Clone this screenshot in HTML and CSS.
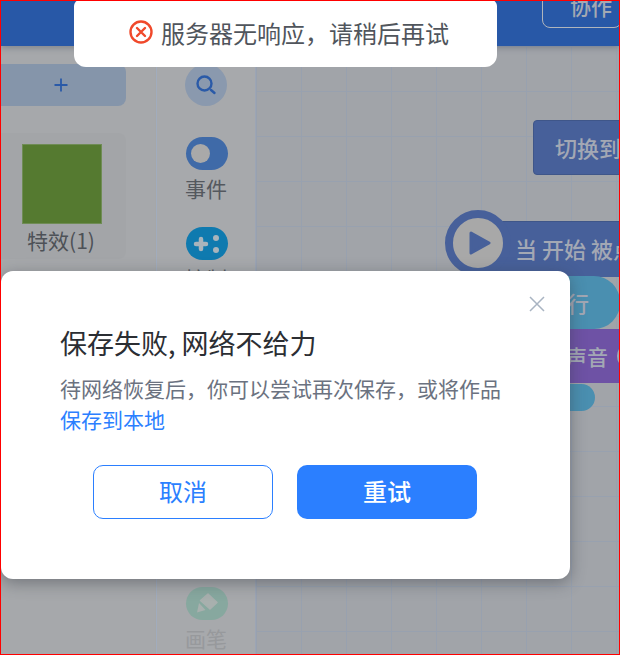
FILE: index.html
```html
<!DOCTYPE html>
<html lang="zh-CN">

<head>
    <meta charset="UTF-8">
    <meta name="viewport" content="width=device-width, initial-scale=1.0">
    <title>保存失败</title>

    <link rel="stylesheet" href="styles.css">
</head>

<body>
    <div class="page">
        <div class="header">
            <button class="btn_collab">协作</button>
        </div>

        <div class="workspace">
            <div class="assets">
                <div class="add_asset">
                    <svg width="16" height="16" viewBox="0 0 16 16"><path d="M8 1.500v13M1.500 8h13" stroke="#2a5aa8" stroke-width="1.800" fill="none"/></svg>
                </div>
                <div class="asset_card">
                    <div class="asset_thumb"></div>
                    <div class="asset_name">特效(1)</div>
                </div>
            </div>

            <div class="categories">
                <div class="search_circle">
                    <svg width="24" height="24" viewBox="0 0 24 24"><circle cx="10.500" cy="10.500" r="7" stroke="#2a5aa8" stroke-width="2.400" fill="none"/><path d="M17 17l3.500 3" stroke="#2a5aa8" stroke-width="2.400" stroke-linecap="round"/></svg>
                </div>
                <div class="category">
                    <div class="pill pill_event"><span class="pill_knob"></span></div>
                    <div class="category_name">事件</div>
                </div>
                <div class="category">
                    <div class="pill pill_control">
                        <svg width="42" height="33" viewBox="0 0 42 33"><path d="M15 12v10M10 17h10" stroke="#a8b4bc" stroke-width="4.500" stroke-linecap="round"/><circle cx="30" cy="11" r="3" fill="#a8b4bc"/><circle cx="30" cy="23" r="3" fill="#a8b4bc"/></svg>
                    </div>
                    <div class="category_name">控制</div>
                </div>
                <div class="category category_pen">
                    <div class="pill pill_pen">
                        <svg width="42" height="33" viewBox="0 0 42 33"><path d="M22 7l9 8.500-7 6.500-9.500-8.500z" fill="#a8b0ae" stroke="#a8b0ae" stroke-width="1.500" stroke-linejoin="round"/><path d="M13 16l6.500 7-8.500 2.500z" fill="#a8b0ae"/></svg>
                    </div>
                    <div class="category_name">画笔</div>
                </div>
            </div>

            <div class="canvas">
                <div class="block block_switch">切换到</div>
                <div class="block block_hat">
                    <span class="hat_circle">
                        <svg width="22" height="24" viewBox="0 0 22 24"><path d="M2 2l18 10L2 22z" fill="#47609a" stroke="#47609a" stroke-width="3" stroke-linejoin="round"/></svg>
                    </span>
                    <span class="hat_bar">当 开始 被点击</span>
                </div>
                <div class="block block_run">行</div>
                <div class="block block_sound">声音</div>
                <div class="block block_end"></div>
            </div>
        </div>

        <div class="toast">
            <svg width="24" height="24" viewBox="0 0 24 24"><circle cx="12" cy="12" r="10.500" stroke="#f0492b" stroke-width="2.400" fill="none"/><path d="M8 8l8 8M16 8l-8 8" stroke="#f0492b" stroke-width="2.400" stroke-linecap="round"/></svg>
            <span>服务器无响应，请稍后再试</span>
        </div>

        <div class="dialog">
            <svg class="dialog_close" width="18" height="18" viewBox="0 0 18 18"><path d="M2 2l14 14M16 2L2 16" stroke="#a9b4c2" stroke-width="1.500"/></svg>
            <h2 class="dialog_title">保存失败, 网络不给力</h2>
            <p class="dialog_text">待网络恢复后，你可以尝试再次保存，或将作品<br><a class="dialog_link">保存到本地</a></p>
            <div class="dialog_btns">
                <button class="btn btn_cancel">取消</button>
                <button class="btn btn_retry">重试</button>
            </div>
        </div>
    </div>
</body>

</html>
```

FILE: styles.css
```css
* {
    box-sizing: border-box;
}

body {
    margin: 0;
    font-family: "Noto Sans CJK SC", "Noto Sans", sans-serif;
}

.page {
    position: relative;
    display: flex;
    flex-direction: column;
    width: 620px;
    height: 655px;
    overflow: hidden;
    border: 1px solid #ff0000;
    background-color: #a6a8ab;
}

.header {
    display: flex;
    justify-content: flex-end;
    align-items: flex-start;
    position: relative;
    z-index: 2;
    flex: none;
    height: 45px;
    background-color: #2858a7;
    box-shadow: 0 2px 6px rgba(60, 70, 90, 0.35);
}

.btn_collab {
    width: 80px;
    height: 38px;
    margin-top: -11px;
    margin-right: -3px;
    padding: 0 0 6px 27px;
    text-align: left;
    border: 1px solid #b0b5bc;
    border-radius: 8px;
    background: transparent;
    color: #a4a9b2;
    font-family: inherit;
    font-size: 21px;
    font-weight: 500;
}

.workspace {
    display: flex;
    flex: 1;
    min-height: 0;
}

.assets {
    flex: none;
    width: 155px;
    padding-top: 18px;
}

.add_asset {
    display: flex;
    justify-content: center;
    align-items: center;
    width: 125px;
    height: 42px;
    padding-right: 5px;
    border-radius: 0 8px 8px 0;
    background-color: #8595aa;
}

.asset_card {
    width: 125px;
    height: 126px;
    margin-top: 27px;
    padding: 11px 5px 0 0;
    border-radius: 0 8px 8px 0;
    background-color: #a3a5a8;
    text-align: center;
}

.asset_thumb {
    width: 80px;
    height: 80px;
    margin-left: 21px;
    border: 1px solid #6f8c55;
    background-color: #557a30;
}

.asset_name {
    margin-top: 1px;
    font-size: 21px;
    line-height: 30px;
    color: #4d5157;
}

.categories {
    display: flex;
    flex-direction: column;
    align-items: center;
    position: relative;
    flex: none;
    width: 100px;
    padding-top: 18px;
    border-left: 1px solid #a1acbd;
    border-right: 1px solid #9ca5b5;
    background-color: #a7a9ac;
    box-shadow: 1px 0 2px rgba(70, 80, 110, 0.2);
}

.search_circle {
    display: flex;
    justify-content: center;
    align-items: center;
    width: 42px;
    height: 42px;
    border-radius: 50%;
    background-color: #8a99ae;
}

.category {
    display: flex;
    flex-direction: column;
    align-items: center;
    width: 100%;
    height: 90px;
}

.search_circle + .category {
    margin-top: 31px;
}

.category_pen {
    position: absolute;
    top: 541px;
    left: 0;
}

.pill {
    display: flex;
    align-items: center;
    flex: none;
    width: 42px;
    height: 33px;
    margin-left: 2px;
    border-radius: 17px;
}

.pill_event {
    padding-left: 5px;
    background-color: #3f6aa8;
}

.pill_knob {
    width: 19px;
    height: 19px;
    border-radius: 50%;
    background-color: #a9a9a9;
}

.pill_control {
    background-color: #0f7aaf;
}

.pill_pen {
    background-color: #87a89f;
}

.category_name {
    margin-top: 3px;
    font-size: 21px;
    line-height: 30px;
    color: #54585e;
}

.category_pen .category_name {
    color: #97999c;
}

.canvas {
    position: relative;
    flex: 1;
    background-color: #a1a4a9;
    background-image:
        linear-gradient(to right, #98a1af 1px, transparent 1px),
        linear-gradient(to bottom, #98a1af 1px, transparent 1px);
    background-size: 45px 45px;
    background-position: 45px 0;
}

/* blocks sit on a free canvas, so they keep their own place */
.block {
    position: absolute;
    color: #a3a8b4;
    font-size: 22px;
    font-weight: 500;
}

.block_switch {
    left: 277px;
    top: 74px;
    width: 120px;
    height: 55px;
    padding-left: 21px;
    line-height: 53px;
    border: 1px solid #3f5689;
    border-radius: 4px;
    background-color: #47609a;
}

.block_hat {
    left: 189px;
    top: 164px;
    width: 260px;
    height: 66px;
}

.hat_circle {
    display: flex;
    justify-content: center;
    align-items: center;
    position: absolute;
    left: 0;
    top: 0;
    z-index: 1;
    width: 66px;
    height: 66px;
    border: 8px solid #47609a;
    border-radius: 50%;
    background-color: #a8a8a8;
}

.hat_circle svg {
    margin-left: 4px;
}

.hat_bar {
    position: absolute;
    left: 50px;
    top: 11px;
    width: 210px;
    height: 56px;
    padding-left: 20px;
    line-height: 52px;
    white-space: nowrap;
    background-color: #47609a;
    border-top: 1px solid #3f5689;
}

.block_run {
    left: 200px;
    top: 230px;
    width: 164px;
    height: 53px;
    padding-left: 111px;
    line-height: 53px;
    border-radius: 0 26px 26px 0;
    background-color: #4a8fb0;
}

.block_sound {
    left: 200px;
    top: 283px;
    width: 200px;
    height: 54px;
    padding-left: 110px;
    line-height: 54px;
    font-size: 21px;
    background-color: #6e52a5;
}

.block_sound::after {
    content: "";
    position: absolute;
    left: 161px;
    top: 17px;
    width: 14px;
    height: 20px;
    border-radius: 50%;
    background-color: #a3a8b4;
}

.block_end {
    left: 200px;
    top: 338px;
    width: 139px;
    height: 27px;
    border-radius: 0 14px 14px 0;
    background-color: #4a8fb0;
}

.toast {
    display: flex;
    align-items: center;
    gap: 8px;
    position: absolute;
    left: 73px;
    top: -1px;
    z-index: 5;
    width: 423px;
    height: 67px;
    padding: 0 0 3px 55px;
    border-radius: 6px 6px 12px 12px;
    background-color: #ffffff;
    font-size: 24px;
    color: #50555c;
}

.dialog {
    position: absolute;
    left: 0;
    top: 270px;
    z-index: 4;
    width: 569px;
    height: 308px;
    padding: 52px 60px 0 59px;
    border-radius: 12px;
    background-color: #ffffff;
    box-shadow: 0 4px 16px rgba(50, 55, 65, 0.45);
}

.dialog_close {
    position: absolute;
    right: 24px;
    top: 24px;
}

.dialog_title {
    margin: 0;
    font-size: 27px;
    font-weight: 400;
    line-height: 40px;
    color: #2b2e33;
}

.dialog_text {
    margin: 10px 0 0;
    font-size: 21px;
    line-height: 31px;
    color: #6b7280;
}

.dialog_link {
    color: #2b7fff;
}

.dialog_btns {
    display: flex;
    justify-content: center;
    gap: 24px;
    margin-top: 30px;
}

.btn {
    width: 180px;
    height: 54px;
    padding: 0 0 3px;
    border-radius: 10px;
    font-family: inherit;
    font-size: 24px;
}

.btn_cancel {
    border: 1px solid #2b7fff;
    background-color: #ffffff;
    color: #2b7fff;
}

.btn_retry {
    border: none;
    background-color: #2b7fff;
    color: #ffffff;
    font-weight: 500;
}
```
